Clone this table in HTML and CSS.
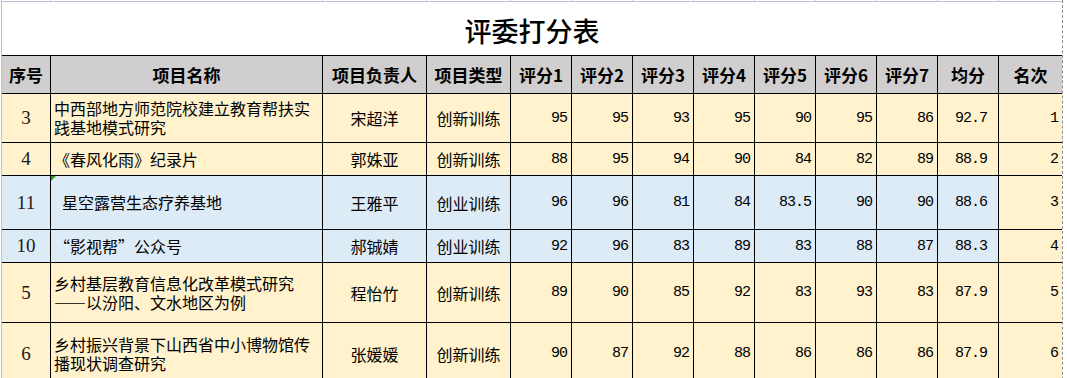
FILE: index.html
```html
<!DOCTYPE html>
<html lang="zh-CN">
<head>
<meta charset="utf-8">
<title>评委打分表</title>
<link rel="stylesheet" href="styles.css">
</head>
<body>
<div class="sheet">
  <div class="toprow">
    <span></span><span></span><span></span><span></span><span></span><span></span><span></span><span></span><span></span><span></span><span></span><span></span><span class="last"></span>
  </div>
  <div class="title">评委打分表</div>
  <div class="grid">
    <div class="cell hd">序号</div>
    <div class="cell hd">项目名称</div>
    <div class="cell hd">项目负责人</div>
    <div class="cell hd">项目类型</div>
    <div class="cell hd">评分1</div>
    <div class="cell hd">评分2</div>
    <div class="cell hd">评分3</div>
    <div class="cell hd">评分4</div>
    <div class="cell hd">评分5</div>
    <div class="cell hd">评分6</div>
    <div class="cell hd">评分7</div>
    <div class="cell hd">均分</div>
    <div class="cell hd last">名次</div>

    <div class="cell y seq">3</div>
    <div class="cell y name">中西部地方师范院校建立教育帮扶实践基地模式研究</div>
    <div class="cell y ctr">宋超洋</div>
    <div class="cell y ctr">创新训练</div>
    <div class="cell y num">95</div>
    <div class="cell y num">95</div>
    <div class="cell y num">93</div>
    <div class="cell y num">95</div>
    <div class="cell y num">90</div>
    <div class="cell y num">95</div>
    <div class="cell y num">86</div>
    <div class="cell y num avg">92.7</div>
    <div class="cell y num last">1</div>

    <div class="cell y seq">4</div>
    <div class="cell y name">《春风化雨》纪录片</div>
    <div class="cell y ctr">郭姝亚</div>
    <div class="cell y ctr">创新训练</div>
    <div class="cell y num">88</div>
    <div class="cell y num">95</div>
    <div class="cell y num">94</div>
    <div class="cell y num">90</div>
    <div class="cell y num">84</div>
    <div class="cell y num">82</div>
    <div class="cell y num">89</div>
    <div class="cell y num avg">88.9</div>
    <div class="cell y num last">2</div>

    <div class="cell b seq">11</div>
    <div class="cell b name indent flag">星空露营生态疗养基地</div>
    <div class="cell b ctr">王雅平</div>
    <div class="cell b ctr">创业训练</div>
    <div class="cell b num">96</div>
    <div class="cell b num">96</div>
    <div class="cell b num">81</div>
    <div class="cell b num">84</div>
    <div class="cell b num">83.5</div>
    <div class="cell b num">90</div>
    <div class="cell b num">90</div>
    <div class="cell b num avg">88.6</div>
    <div class="cell y num last">3</div>

    <div class="cell b seq">10</div>
    <div class="cell b name">“影视帮”公众号</div>
    <div class="cell b ctr">郝铖婧</div>
    <div class="cell b ctr">创业训练</div>
    <div class="cell b num">92</div>
    <div class="cell b num">96</div>
    <div class="cell b num">83</div>
    <div class="cell b num">89</div>
    <div class="cell b num">83</div>
    <div class="cell b num">88</div>
    <div class="cell b num">87</div>
    <div class="cell b num avg">88.3</div>
    <div class="cell y num last">4</div>

    <div class="cell y seq mark">5</div>
    <div class="cell y name">乡村基层教育信息化改革模式研究<br>——以汾阳、文水地区为例</div>
    <div class="cell y ctr">程怡竹</div>
    <div class="cell y ctr">创新训练</div>
    <div class="cell y num">89</div>
    <div class="cell y num">90</div>
    <div class="cell y num">85</div>
    <div class="cell y num">92</div>
    <div class="cell y num">83</div>
    <div class="cell y num">93</div>
    <div class="cell y num">83</div>
    <div class="cell y num avg">87.9</div>
    <div class="cell y num last">5</div>

    <div class="cell y seq">6</div>
    <div class="cell y name">乡村振兴背景下山西省中小博物馆传播现状调查研究</div>
    <div class="cell y ctr">张媛媛</div>
    <div class="cell y ctr">创新训练</div>
    <div class="cell y num">90</div>
    <div class="cell y num">87</div>
    <div class="cell y num">92</div>
    <div class="cell y num">88</div>
    <div class="cell y num">86</div>
    <div class="cell y num">86</div>
    <div class="cell y num">86</div>
    <div class="cell y num avg">87.9</div>
    <div class="cell y num last">6</div>
  </div>
</div>
</body>
</html>
```

FILE: styles.css
```css
html, body {
  margin: 0;
  padding: 0;
  overflow: hidden;
  background: #ffffff;
}

body {
  font-family: "Noto Sans CJK SC", "Noto Sans", sans-serif;
  color: #000;
}

.sheet {
  margin-left: 1px;
  width: 1060px;
  border-left: 1px solid #b7bfd1;
  border-right: 1px dashed #8c8c8c;
  min-height: 400px;
}

.toprow,
.grid {
  display: grid;
  grid-template-columns: 49px 272px 104px 84px repeat(8, 61px) 63px;
}

.toprow {
  height: 2px;
}

.toprow span {
  box-sizing: border-box;
  height: 2px;
  border-right: 1px solid #c3c9d6;
  border-bottom: 1px solid #b7bfd1;
}

.toprow span.last {
  border-right: none;
}

.title {
  box-sizing: border-box;
  height: 54px;
  border-bottom: 1px solid #000;
  display: flex;
  align-items: center;
  justify-content: center;
  padding-top: 3px;
  font-size: 27px;
  font-weight: 500;
}

.grid {
  grid-template-rows: 38px 49px 33px 54px 33px 60px 62px;
}

.cell {
  box-sizing: border-box;
  border-right: 1px solid #000;
  border-bottom: 1px solid #000;
  display: flex;
  align-items: center;
  overflow: hidden;
  position: relative;
}

.cell.last {
  border-right: none;
}

.hd {
  background: #d0cece;
  justify-content: center;
  font-size: 17px;
  font-weight: 700;
}

.y {
  background: #fff2cc;
}

.b {
  background: #ddebf7;
}

.seq {
  justify-content: center;
  font-family: "Liberation Serif", serif;
  font-size: 19px;
  color: #1a1a1a;
}

.name {
  padding-left: 3px;
  padding-right: 1px;
  font-size: 16px;
  line-height: 19px;
}

.indent {
  padding-left: 11px;
}

.ctr {
  justify-content: center;
  font-size: 16px;
}

.num {
  justify-content: flex-end;
  padding-right: 4px;
  font-family: "Liberation Mono", monospace;
  font-size: 15px;
  letter-spacing: -1px;
}

.avg {
  padding-right: 11px;
}

.flag::before {
  content: "";
  position: absolute;
  top: 0;
  left: 0;
  width: 0;
  height: 0;
  border-top: 5px solid #2e9a2e;
  border-right: 5px solid transparent;
}

.mark::before {
  content: "";
  position: absolute;
  top: -1px;
  bottom: 0;
  left: -2px;
  width: 2px;
  background: #21a366;
}
```
